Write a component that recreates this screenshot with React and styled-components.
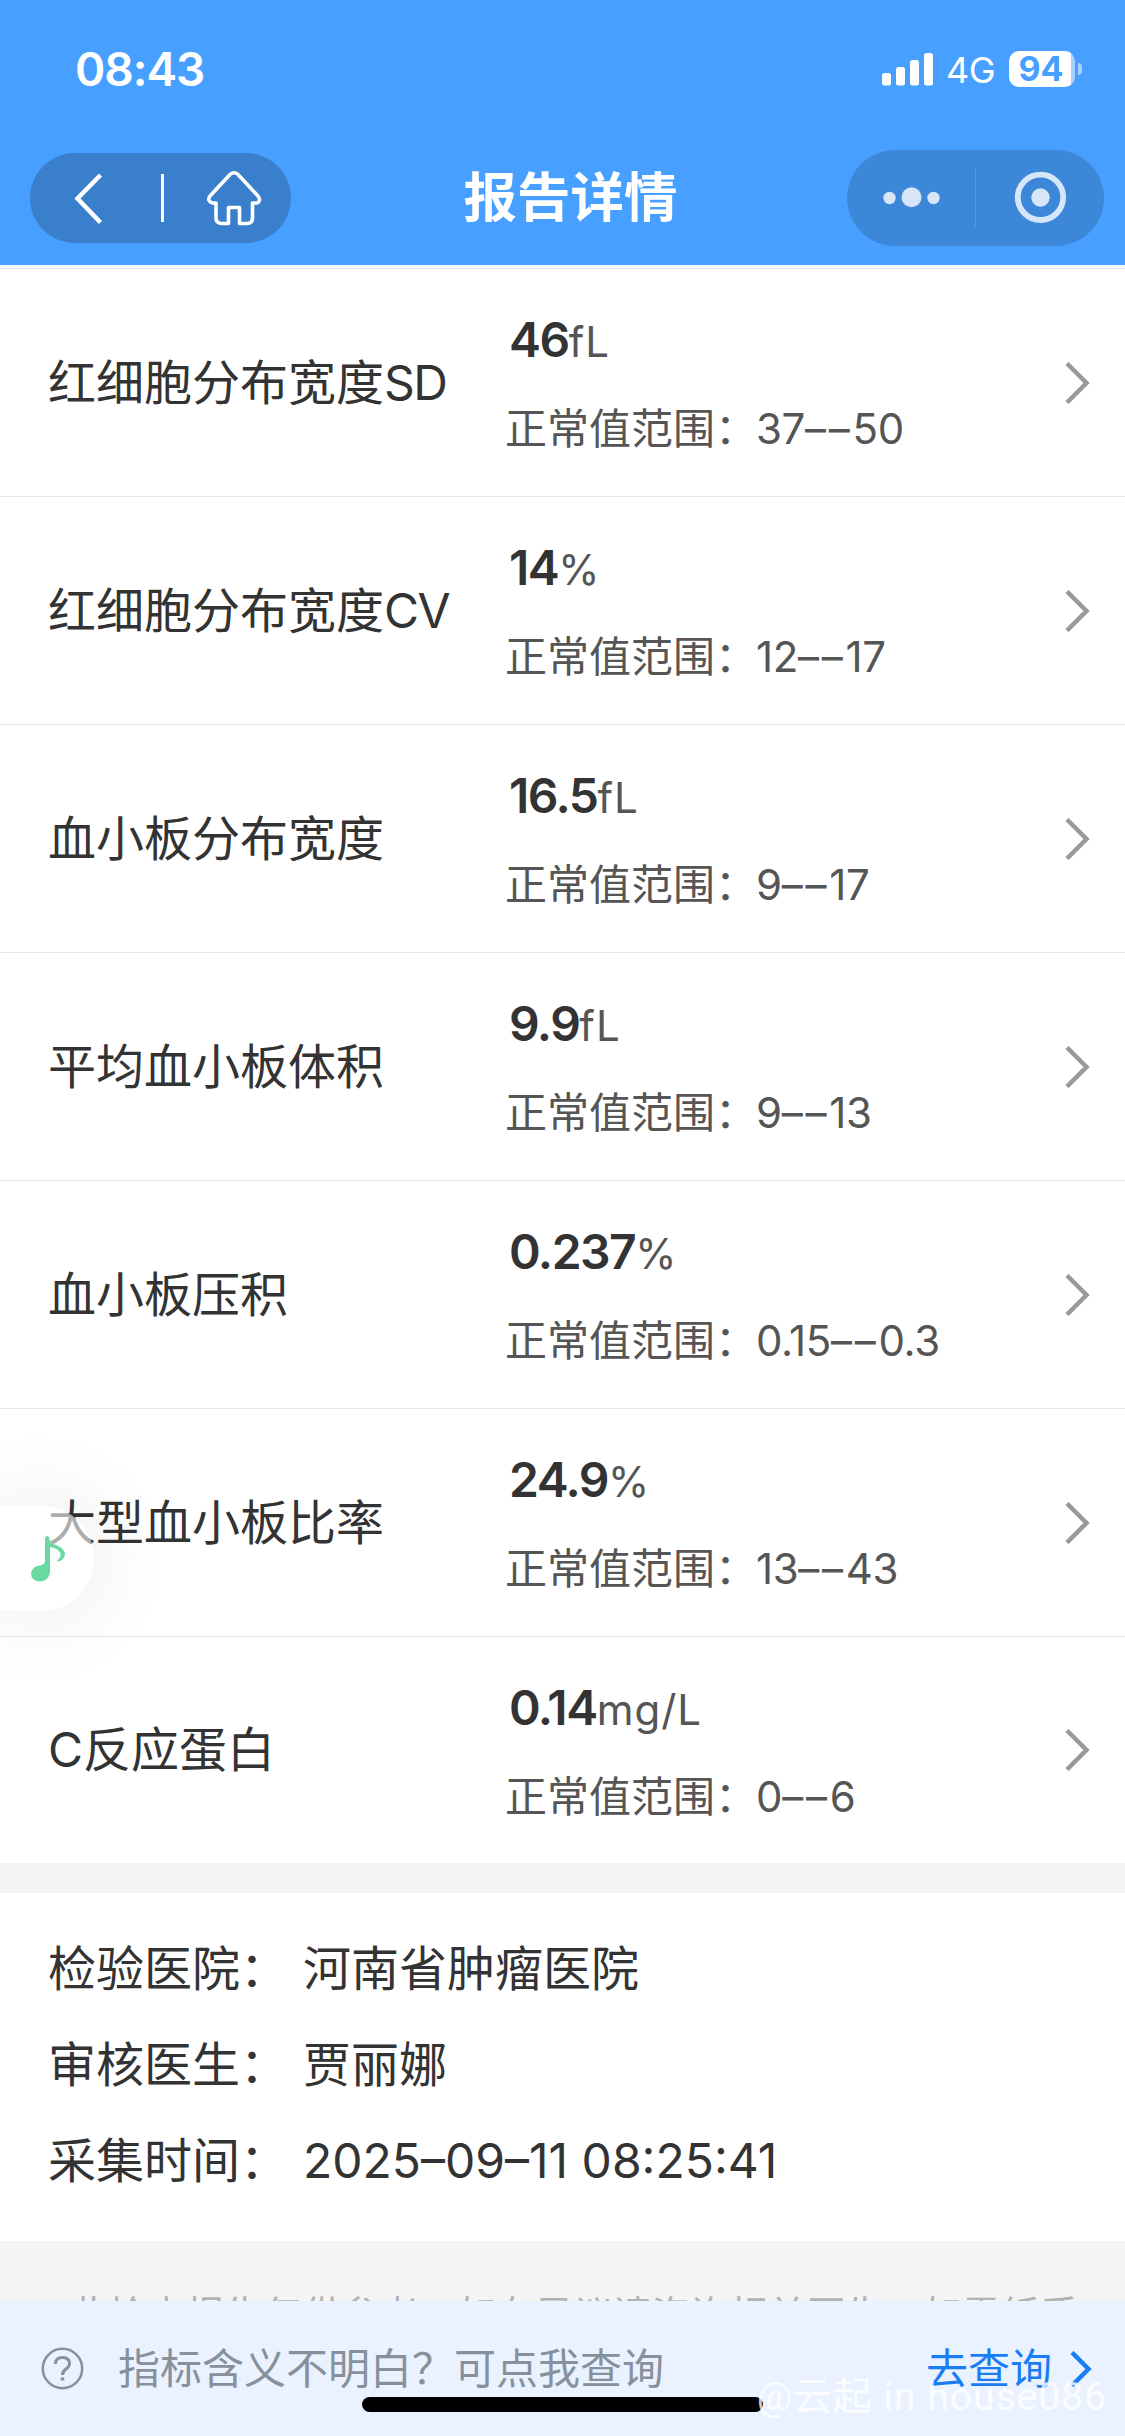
import React from "react";
import styled, { createGlobalStyle } from "styled-components";

const GlobalStyle = createGlobalStyle`
* {
  box-sizing: border-box;
}

body {
  margin: 0;
  background-color: #f4f4f4;
  font-family: Inter, "Noto Sans CJK SC", sans-serif;
}
`;

const Page = styled.div`
width: 1125px;
height: 2436px;
display: flex;
flex-direction: column;
overflow: hidden;
position: relative;
color: #333333;
`;

const Header = styled.header`
height: 265px;
background-color: #479fff;
color: #ffffff;
`;

const StatusBar = styled.div`
display: flex;
justify-content: space-between;
align-items: center;
height: 138px;
padding: 0 43px 0 75px;
`;

const Time = styled.span`
font-size: 46px;
font-weight: 600;
line-height: 56px;
letter-spacing: -1px;
`;

const StatusIcons = styled.div`
display: flex;
align-items: center;
`;

const Network = styled.span`
font-size: 36px;
line-height: 44px;
letter-spacing: -0.5px;
margin: 2px 14px 0 13px;
`;

const Battery = styled.div`
width: 66px;
height: 36px;
border-radius: 10px;
background: linear-gradient(to right, #ffffff 62px, #a6d0ff 62px);
color: #479fff;
font-size: 34px;
font-weight: 700;
line-height: 36px;
text-align: center;
padding-right: 2px;
`;

const BatteryCap = styled.div`
width: 4px;
height: 12px;
margin-left: 3px;
border-radius: 0 4px 4px 0;
background-color: #a6d0ff;
`;

const NavBar = styled.div`
display: flex;
justify-content: space-between;
align-items: center;
height: 120px;
padding: 0 21px 0 30px;
`;

const BackPill = styled.div`
display: flex;
align-items: center;
width: 261px;
height: 90px;
border-radius: 45px;
background-color: #3a7fcc;
`;

const MenuPill = styled.div`
display: flex;
align-items: center;
width: 257px;
height: 96px;
border-radius: 48px;
background-color: #3c87d8;
`;

const Title = styled.h1`
margin: 0 0 0 3px;
font-size: 53.5px;
font-weight: 600;
line-height: 72px;
`;

const List = styled.ul`
margin: 0;
padding: 3px 0 0;
list-style: none;
background-color: #f6fbff;
`;

const Item = styled.li`
display: flex;
align-items: center;
height: 228px;
padding: 0 35px 0 48px;
border-top: 1px solid #e6e7ea;
background-color: #ffffff;

&:last-child {
  height: 227px;
}
`;

const ItemName = styled.div`
width: 457px;
font-size: 48px;
line-height: 66px;
white-space: nowrap;
`;

const ItemCode = styled.span`
letter-spacing: -1.5px;
`;

const ItemInfo = styled.div`
flex: 1;
display: flex;
flex-direction: column;
gap: 27px;
padding-top: 2px;
`;

const Result = styled.div`
height: 64px;
padding-left: 4px;
font-size: 42px;
line-height: 64px;
letter-spacing: 1px;
color: #555555;
`;

const Number = styled.span`
font-size: 48px;
font-weight: 600;
letter-spacing: -1.5px;
color: #333333;
`;

const Range = styled.div`
font-size: 42px;
line-height: 60px;
color: #555555;
`;

const RangeValue = styled.span`
letter-spacing: -0.4px;
margin-left: -1px;
`;

const Dash = styled.span`
letter-spacing: 2.8px;
`;

const InfoBlock = styled.section`
height: 348px;
margin-top: 30px;
padding: 28px 48px;
background-color: #ffffff;
`;

const InfoRow = styled.div`
display: flex;
gap: 15px;
font-size: 48px;
line-height: 96px;
`;

const Notice = styled.p`
height: 60px;
margin: 0;
padding: 46px 0 0 50px;
overflow: hidden;
white-space: nowrap;
font-size: 38.8px;
line-height: 56px;
color: #b2b2b2;
`;

const AskBar = styled.footer`
display: flex;
align-items: center;
height: 135px;
padding: 0 33px 0 41px;
background-color: #eaf2ff;
font-size: 42px;
line-height: 60px;
`;

const Question = styled.span`
flex: 1;
margin-left: 34px;
color: #87919c;
`;

const AskLink = styled.span`
margin-right: 18px;
color: #1a7df5;
`;

const HomeIndicator = styled.div`
position: absolute;
left: 362px;
bottom: 24px;
width: 401px;
height: 15px;
border-radius: 8px;
background-color: #000000;
`;

const Watermark = styled.div`
position: absolute;
right: 18px;
bottom: 12px;
font-family: Roboto, "Noto Sans CJK SC", sans-serif;
font-size: 39px;
line-height: 54px;
letter-spacing: 1px;
white-space: nowrap;
color: rgba(255, 255, 255, 0.8);
`;

const MusicButton = styled.div`
position: absolute;
left: 0;
top: 1506px;
width: 94px;
height: 105px;
display: flex;
align-items: center;
padding-left: 31px;
border-radius: 0 52px 52px 0;
background-color: rgba(255, 255, 255, 0.6);
box-shadow: 0 0 90px rgba(0, 0, 0, 0.1);
`;

const results = [
  { name: "红细胞分布宽度", code: "SD", value: "46", unit: "fL", low: "37", high: "50" },
  { name: "红细胞分布宽度", code: "CV", value: "14", unit: "%", low: "12", high: "17" },
  { name: "血小板分布宽度", value: "16.5", unit: "fL", low: "9", high: "17" },
  { name: "平均血小板体积", value: "9.9", unit: "fL", low: "9", high: "13" },
  { name: "血小板压积", value: "0.237", unit: "%", low: "0.15", high: "0.3" },
  { name: "大型血小板比率", value: "24.9", unit: "%", low: "13", high: "43" },
  { name: "C反应蛋白", value: "0.14", unit: "mg/L", low: "0", high: "6" },
];

const SignalIcon = () => (
  <svg width="51" height="33" viewBox="0 0 51 33" fill="#fff">
    <rect x="0" y="20" width="9" height="12.5" rx="2.5" />
    <rect x="14" y="14" width="9" height="18.5" rx="2.5" />
    <rect x="28" y="7" width="9" height="25.5" rx="2.5" />
    <rect x="42" y="0" width="9" height="32.5" rx="2.5" />
  </svg>
);

const BackIcons = () => (
  <svg width="261" height="90" viewBox="0 0 261 90" fill="none" stroke="#fff">
    <path d="M70.5 22 L47.5 45.5 L70.5 69.5" strokeWidth="4.5" />
    <path d="M132.5 21 V69" strokeWidth="3" />
    <path
      d="M200 21.5 Q204 18 208 21.5 L228 43 Q231.5 48 227 50 H222.5 V65 Q222.5 70.5 217 70.5 H209.500 V54.5 H198.5 V70.5 H192 Q186 70.5 186 65 V50 H182.5 Q176.5 48 180 43 Z"
      strokeWidth="3.6"
      strokeLinejoin="round"
    />
  </svg>
);

const MenuIcons = () => (
  <svg width="257" height="96" viewBox="0 0 257 96" fill="#d6e6f8">
    <circle cx="42.5" cy="48" r="6.2" />
    <circle cx="64.5" cy="47.2" r="10" />
    <circle cx="86.5" cy="48" r="6.2" />
    <rect x="128" y="18" width="1" height="60" fill="#5496de" />
    <circle cx="193.5" cy="47.3" r="22.7" fill="none" stroke="#d6e6f8" strokeWidth="5.8" />
    <circle cx="193.5" cy="47.5" r="9.2" />
  </svg>
);

const ArrowIcon = () => (
  <svg width="25" height="42" viewBox="0 0 25 42" fill="none">
    <path d="M2 1.5 L21.5 21 L2 40.5" stroke="#999" strokeWidth="4.5" />
  </svg>
);

const LinkArrowIcon = () => (
  <svg width="22" height="36" viewBox="0 0 22 36" fill="none">
    <path d="M2 1.5 L18.5 18 L2 34.5" stroke="#1a7df5" strokeWidth="4.5" />
  </svg>
);

const HelpIcon = () => (
  <svg width="43" height="43" viewBox="0 0 43 43" fill="none" stroke="#87919c" strokeWidth="2.5">
    <circle cx="21.5" cy="21.5" r="19.7" />
    <path d="M14.5 17 Q14.5 10.5 21.5 10.5 Q28.5 10.5 28.5 16.5 Q28.5 19.5 25 22 Q21.5 24.5 21.5 28" strokeWidth="3" />
    <path d="M21.5 30.5 V33.5" strokeWidth="3.6" />
  </svg>
);

const NoteIcon = () => (
  <svg width="35" height="46" viewBox="0 0 35 46" fill="#69d8a1">
    <path d="M14 3 Q14 0 16.5 0 Q18 0 18.5 4 Q20 7.5 25 9 Q34 12.5 34 18.5 Q33.5 25 25 25.5 Q30 22 29.5 18 Q28 12.5 19 11 V34 Q19 45 8.5 45.5 Q0 45 0 37 Q1 30.5 9 29.5 Q14 28.5 14 25 Z" />
  </svg>
);

export default function App() {
  return <>
    <GlobalStyle />
    <Page>
      <Header>
        <StatusBar>
          <Time>08:43</Time>
          <StatusIcons>
            <SignalIcon />
            <Network>4G</Network>
            <Battery>94</Battery>
            <BatteryCap />
          </StatusIcons>
        </StatusBar>
        <NavBar>
          <BackPill><BackIcons /></BackPill>
          <Title>报告详情</Title>
          <MenuPill><MenuIcons /></MenuPill>
        </NavBar>
      </Header>
      <List>
        {results.map((item, index) => (
          <Item key={index}>
            <ItemName>{item.name}{item.code && <ItemCode>{item.code}</ItemCode>}</ItemName>
            <ItemInfo>
              <Result><Number>{item.value}</Number>{item.unit}</Result>
              <Range>正常值范围：<RangeValue>{item.low}<Dash>––</Dash>{item.high}</RangeValue></Range>
            </ItemInfo>
            <ArrowIcon />
          </Item>
        ))}
      </List>
      <InfoBlock>
        <InfoRow><span>检验医院：</span><span>河南省肿瘤医院</span></InfoRow>
        <InfoRow><span>审核医生：</span><span>贾丽娜</span></InfoRow>
        <InfoRow><span>采集时间：</span><span>2025–09–11 08:25:41</span></InfoRow>
      </InfoBlock>
      <Notice>*此检查报告仅供参考，如有异议请咨询相关医生，如需纸质</Notice>
      <AskBar>
        <HelpIcon />
        <Question>指标含义不明白？可点我查询</Question>
        <AskLink>去查询</AskLink>
        <LinkArrowIcon />
      </AskBar>
      <MusicButton><NoteIcon /></MusicButton>
      <HomeIndicator />
      <Watermark>@云起 in house086</Watermark>
    </Page>
  </>
}
